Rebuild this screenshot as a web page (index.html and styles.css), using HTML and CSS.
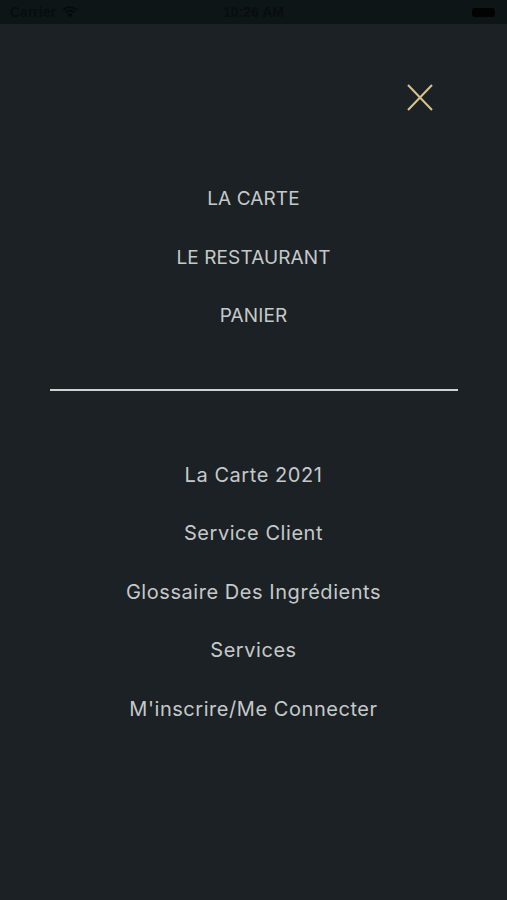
FILE: index.html
```html
<!DOCTYPE html>
<html lang="fr">
<head>
    <meta charset="UTF-8">
    <meta name="viewport" content="width=device-width, initial-scale=1.0">
    <title>Menu</title>
    <link rel="stylesheet" href="styles.css">
</head>
<body>
    <div class="screen">
        <!-- Status bar -->
        <div class="status-bar">
            <div class="status-left">
                <span>Carrier</span>
                <svg class="wifi" width="16" height="12" viewBox="0 0 16 12">
                    <path d="M8 11.5 L5.6 8.6 A3.6 3.6 0 0 1 10.4 8.6 Z" fill="#050909"/>
                    <path d="M3.6 6.4 A6.6 6.6 0 0 1 12.4 6.4" fill="none" stroke="#050909" stroke-width="1.7"/>
                    <path d="M1.3 3.9 A9.8 9.8 0 0 1 14.7 3.9" fill="none" stroke="#050909" stroke-width="1.7"/>
                </svg>
            </div>
            <div class="status-time">10:26 AM</div>
            <div class="status-right">
                <span class="battery"></span>
            </div>
        </div>

        <!-- Menu -->
        <main class="menu">
            <header class="menu-header">
                <button class="close-btn" aria-label="Fermer">
                    <svg width="26" height="27" viewBox="0 0 26 27">
                        <path d="M1 1 L25 26 M25 1 L1 26" stroke="#d8c38c" stroke-width="2" fill="none"/>
                    </svg>
                </button>
            </header>

            <nav class="nav nav-main">
                <a href="#carte">LA CARTE</a>
                <a href="#restaurant">LE RESTAURANT</a>
                <a href="#panier">PANIER</a>
            </nav>

            <hr class="divider">

            <nav class="nav nav-secondary">
                <a href="#carte-2021">La Carte 2021</a>
                <a href="#service-client">Service Client</a>
                <a href="#glossaire">Glossaire Des Ingrédients</a>
                <a href="#services">Services</a>
                <a href="#compte">M'inscrire/Me Connecter</a>
            </nav>
        </main>
    </div>
</body>
</html>
```

FILE: styles.css
```css
/* Base */
* { margin: 0; padding: 0; box-sizing: border-box; }
body {
    font-family: Inter, "Liberation Sans", sans-serif;
    background: #1b2124;
    color: #c6c9ca;
}

.screen { min-height: 900px; display: flex; flex-direction: column; }

/* Status bar */
.status-bar {
    height: 24px; background: #0e1517;
    display: flex; align-items: center; justify-content: space-between;
    padding: 0 10px 0 10px;
    font-family: "Liberation Sans", sans-serif; font-size: 14px; font-weight: 600;
    color: #080d0e; position: relative;
}
.status-left { display: flex; align-items: center; gap: 6px; }
.status-time { position: absolute; left: 0; right: 0; text-align: center; }
.status-right { display: flex; align-items: center; }
.battery {
    display: block; width: 23px; height: 9px; border-radius: 3px;
    background: #020404; margin-right: 2px;
}

/* Menu */
.menu { flex: 1; background: #1b2124; }
.menu-header {
    height: 146px; display: flex; justify-content: flex-end;
    align-items: flex-start; padding: 60px 74px 0 0;
}
.close-btn { background: none; border: none; cursor: pointer; display: block; }
.close-btn svg { display: block; }

.nav { display: flex; flex-direction: column; align-items: center; }
.nav a {
    display: block; height: 58.5px; line-height: 58.5px;
    color: #c6c9ca; text-decoration: none; font-size: 20px;
    letter-spacing: 0.55px;
}
.nav-main a { font-size: 19px; letter-spacing: 0.1px; }

.divider {
    border: none; height: 2px; background: #cfd3d4;
    margin: 43px 49px 55px 50px;
}
```
